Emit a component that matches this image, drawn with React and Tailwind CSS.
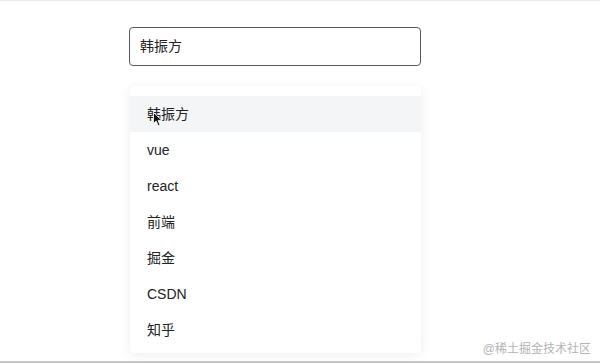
import React, { useState } from 'react';

const options = ['韩振方', 'vue', 'react', '前端', '掘金', 'CSDN', '知乎'];

const font = { fontFamily: '"Liberation Sans", Arial, "Noto Sans CJK SC", sans-serif' };

const App = () => {
  const [value] = useState('韩振方');
  const [hover] = useState(0);

  return (
    <div
      className="relative h-[363px] w-full overflow-hidden bg-white border-t border-t-[#ebebeb] border-b-2 border-b-[#c6c6c6] text-[#222]"
      style={font}
    >
      <div className="pl-[129px] pt-[26px]">
        {/* search input */}
        <div className="flex h-[39px] w-[292px] items-center rounded-[4px] border border-[#5a5a5a] bg-white pl-[10px] text-[14px]">
          {value}
        </div>

        {/* suggestion list */}
        <div className="relative mt-[20px] ml-px w-[291px] rounded-[4px] bg-white pt-[10px] pb-[5px] shadow-[0_2px_12px_rgba(0,0,0,0.07)]">
          {options.map((item, i) => (
            <div
              key={i}
              className={`flex h-[36px] items-center pl-[17px] text-[14px] ${i === hover ? 'bg-[#f4f5f6]' : ''}`}
            >
              {item}
            </div>
          ))}

          {/* mouse pointer */}
          <svg
            className="absolute left-[23px] top-[26px]"
            width="10"
            height="15"
            viewBox="0 0 10 15"
          >
            <path
              d="M0.5 0.5 L0.5 11.5 L3.2 9 L5.2 13.8 L7 13 L5 8.4 L8.8 8.4 Z"
              fill="#111"
              stroke="#fff"
              strokeWidth="0.8"
            />
          </svg>
        </div>
      </div>

      {/* watermark */}
      <div className="absolute right-[9px] bottom-[3px] text-[12px] text-[#b4b4b4] [text-shadow:0_0_2px_#fff]">
        @稀土掘金技术社区
      </div>
    </div>
  );
};

export default App;
